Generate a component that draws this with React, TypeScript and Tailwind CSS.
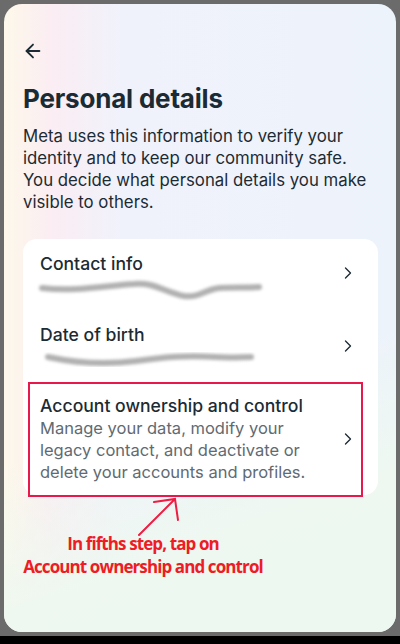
import { ChevronRight, ArrowLeft } from "lucide-react"

const font = { fontFamily: "Inter, 'Noto Sans', sans-serif" }

function Scribble({ d, id }: { d: string; id: string }) {
  return (
    <svg width="240" height="26" viewBox="0 0 240 26" className="block">
      <defs>
        <filter id={id} x="-10%" y="-50%" width="120%" height="200%">
          <feGaussianBlur stdDeviation="1.8" />
        </filter>
      </defs>
      <path d={d} fill="none" stroke="#a3a3a3" strokeWidth="6" strokeLinecap="round" filter={`url(#${id})`} opacity="0.85" />
    </svg>
  )
}

export default function App() {
  return (
    <div className="w-[400px] h-[644px] bg-[#000] overflow-hidden" style={font}>
      <div className="h-[636px] bg-[#6b6b6b] pt-1 px-1">
        <div className="relative h-[628px] rounded-[18px] overflow-hidden bg-[linear-gradient(90deg,#fdf8ea_0%,#fbedf3_12%,#f0f2fb_30%,#edf3fb_100%)]">
          <div className="absolute inset-0 bg-[linear-gradient(160deg,transparent_60%,#eef8f0_80%,#edf8f1_100%)]" />
          <div className="relative px-[19px] pt-[36px]">
            <ArrowLeft className="w-[22px] h-[22px] text-[#1c2b33] -ml-[1px]" strokeWidth={2} />
            <h1 className="mt-[22px] text-[26px] leading-[30px] font-bold text-[#1c2b33] tracking-[-0.2px]">Personal details</h1>
            <p className="mt-[11px] w-[352px] text-[16.8px] leading-[22px] text-[#1c2b33]">
              Meta uses this information to verify your identity and to keep our community safe. You decide what personal details you make visible to others.
            </p>

            <div className="relative mt-[26px] w-[355px] rounded-[14px] bg-white pb-[12px]">
              <div className="flex items-start pl-[17px] pr-[20px] pt-[14px] h-[72px]">
                <div className="flex-1">
                  <div className="text-[17.6px] leading-[22px] font-medium text-[#1c2b33]">Contact info</div>
                  <div className="-ml-[6px] mt-[1px]">
                    <Scribble id="s1" d="M8 12 C40 16 70 10 100 8 C120 6 130 16 150 20 C165 22 170 14 185 12 C200 11 210 12 225 11" />
                  </div>
                </div>
                <ChevronRight className="w-5 h-5 text-[#1c2b33] mt-[10px]" strokeWidth={1.6} />
              </div>
              <div className="flex items-start pl-[17px] pr-[20px] pt-[13px] h-[72px]">
                <div className="flex-1">
                  <div className="text-[17.6px] leading-[22px] font-medium text-[#1c2b33]">Date of birth</div>
                  <div className="-ml-[4px] mt-[1px]">
                    <Scribble id="s2" d="M12 10 C40 16 70 18 100 14 C130 10 150 8 180 10 C195 11 205 10 215 10" />
                  </div>
                </div>
                <ChevronRight className="w-5 h-5 text-[#1c2b33] mt-[12px]" strokeWidth={1.6} />
              </div>
              <div className="flex items-center pl-[17px] pr-[20px] pt-[12px]">
                <div className="flex-1">
                  <div className="text-[17.6px] leading-[22px] font-medium text-[#1c2b33]">Account ownership and control</div>
                  <div className="text-[16.5px] leading-[22px] text-[#5f6b72]">
                    Manage your data, modify your legacy contact, and deactivate or delete your accounts and profiles.
                  </div>
                </div>
                <ChevronRight className="w-5 h-5 text-[#1c2b33] ml-2" strokeWidth={1.6} />
              </div>
              <div className="absolute left-[5px] top-[143px] w-[335px] h-[115px] border-2 border-[#e8194a]" />
            </div>

            <svg className="absolute left-[128px] top-[489px]" width="60" height="50" viewBox="0 0 60 50">
              <path d="M7 42 L43 6 M22 9 L43 6 L46 27" fill="none" stroke="#ef1c43" strokeWidth="2" strokeLinecap="round" />
            </svg>

            <div className="mt-[37px] w-[246px] -ml-[3px] text-center text-[#ee1c25] font-bold text-[17px] leading-[23px] tracking-[-0.9px] whitespace-nowrap" style={{ fontFamily: "'Open Sans', sans-serif" }}>
              <div>In fifths step, tap on</div>
              <div>Account ownership and control</div>
            </div>
          </div>
        </div>
      </div>
    </div>
  )
}
